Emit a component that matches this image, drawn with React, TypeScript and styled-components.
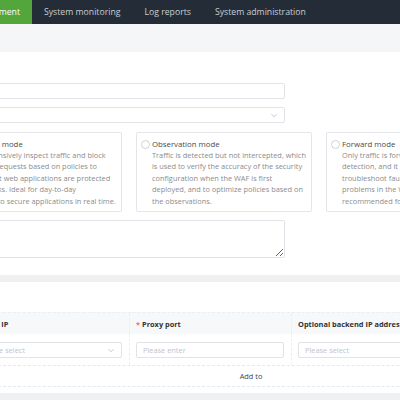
import React from "react";
import styled, { createGlobalStyle } from "styled-components";

const GlobalStyle = createGlobalStyle`
  html, body { margin: 0; padding: 0; overflow: hidden; }
  body {
    width: 400px;
    height: 400px;
    background: #eff0f2;
    font-family: "Open Sans", "Noto Sans", sans-serif;
  }
  * { box-sizing: border-box; }
`;

const Page = styled.div`
  width: 900px;
  margin-left: -200px;
  min-height: 400px;
  background: #eff0f2;
`;

const Nav = styled.nav`
  display: flex;
  height: 24px;
  background: #242d37;
`;

const NavLead = styled.div`
  width: 232px;
  display: flex;
  justify-content: space-between;
`;

const Brand = styled.div`
  display: flex;
  align-items: center;
  padding-left: 14px;
  color: #ffffff;
  font-size: 9px;
  font-weight: 700;
`;

const Tab = styled.div<{ $active?: boolean }>`
  display: flex;
  align-items: center;
  padding: 0 12px;
  font-size: 8.7px;
  white-space: nowrap;
  color: ${(p) => (p.$active ? "#ffffff" : "#c9ced4")};
  background: ${(p) => (p.$active ? "#52a63c" : "transparent")};
`;

const Crumb = styled.div`
  height: 28px;
  display: flex;
  align-items: center;
  padding-left: 16px;
  background: #f5f6f7;
  color: #666;
  font-size: 7.4px;
`;

const Section = styled.section<{ $pt: number; $pb: number }>`
  background: #ffffff;
  padding: ${(p) => p.$pt}px 0 ${(p) => p.$pb}px 16px;
`;

const Gap = styled.div`
  height: 7px;
`;

const SectionTitle = styled.div`
  height: 14px;
  line-height: 14px;
  font-size: 8px;
  font-weight: 700;
  color: #333;
`;

const FormRow = styled.div<{ $mt: number }>`
  display: grid;
  grid-template-columns: 130px auto;
  align-items: start;
  margin-top: ${(p) => p.$mt}px;
`;

const Label = styled.div`
  font-size: 7.4px;
  line-height: 16px;
  color: #555;
  text-align: right;
  padding-right: 10px;
`;

const Req = styled.span`
  color: #f56c6c;
  margin-right: 2px;
`;

const Input = styled.div<{ $w?: number }>`
  position: relative;
  width: ${(p) => (p.$w ? `${p.$w}px` : "100%")};
  height: 16px;
  border: 1px solid #e1e3e8;
  border-radius: 2px;
  background: #fff;
  display: flex;
  align-items: center;
  padding: 0 6px;
  font-size: 7.4px;
  color: #c0c4cc;
  white-space: nowrap;
`;

const Chevron = styled.svg`
  position: absolute;
  right: 7px;
  top: 5px;
  width: 6px;
  height: 5px;
`;

const Cards = styled.div`
  display: flex;
  gap: 14px;
`;

const Card = styled.div`
  width: 176px;
  flex: none;
  border: 1px solid #e4e6eb;
  border-radius: 2px;
  padding: 5px 6px 4px 4px;
  display: grid;
  grid-template-columns: 11px 1fr;
`;

const Radio = styled.span`
  width: 9px;
  height: 9px;
  margin-top: 1.5px;
  border: 1px solid #cfd2d8;
  border-radius: 50%;
  background: #fff;
`;

const CardTitle = styled.div`
  font-size: 7.8px;
  line-height: 12px;
  color: #4a4a4a;
  white-space: nowrap;
`;

const CardDesc = styled.div`
  grid-column: 2;
  font-size: 7.4px;
  line-height: 11.4px;
  color: #8c8c8c;
  white-space: nowrap;
`;

const TextArea = styled.textarea`
  width: 339px;
  height: 38px;
  border: 1px solid #e1e3e8;
  border-radius: 2px;
  margin: 0;
  padding: 4px 6px;
  font-family: inherit;
  font-size: 7.4px;
  outline: none;
  display: block;
`;

const TableRow = styled.div`
  display: grid;
  grid-template-columns: 152px auto;
  margin-top: 6px;
`;

const Table = styled.div`
  width: 566px;
`;

const THead = styled.div`
  display: grid;
  grid-template-columns: 162px 162px 162px 80px;
  height: 22px;
  background: #f7f8fa;
  border-top: 1px dashed #eceef1;
`;

const Th = styled.div`
  display: flex;
  align-items: center;
  padding: 0 6px;
  font-size: 7.4px;
  font-weight: 700;
  color: #333;
  white-space: nowrap;
  overflow: hidden;
  border-right: 1px dashed #eceef1;
`;

const TBody = styled.div`
  display: grid;
  grid-template-columns: 162px 162px 162px 80px;
  height: 32px;
  border-bottom: 1px dashed #e6e8eb;
`;

const Td = styled.div`
  display: flex;
  align-items: center;
  padding: 0 7px 0 6px;
  border-right: 1px dashed #eceef1;
`;

const AddRow = styled.div`
  height: 21px;
  display: flex;
  align-items: center;
  justify-content: center;
  border-bottom: 1px dashed #e6e8eb;
  font-size: 7.4px;
  color: #444;
`;

const ChevronIcon = () => (
  <Chevron viewBox="0 0 6 5" fill="none">
    <path d="M0.5 1.2 L3 3.8 L5.5 1.2" stroke="#b8bcc4" strokeWidth="0.8" />
  </Chevron>
);

export default function App() {
  return (
    <>
      <GlobalStyle />
      <Page>
        <Nav>
          <NavLead>
            <Brand>WAF</Brand>
            <Tab $active>Policy management</Tab>
          </NavLead>
          <Tab>System monitoring</Tab>
          <Tab>Log reports</Tab>
          <Tab>System administration</Tab>
        </Nav>
        <Crumb>Sites / Add site</Crumb>
        <Section $pt={10} $pb={17}>
          <SectionTitle>Basic information</SectionTitle>
          <FormRow $mt={7}>
            <Label><Req>*</Req>Site name</Label>
            <Input $w={339} />
          </FormRow>
          <FormRow $mt={8}>
            <Label><Req>*</Req>Site group</Label>
            <Input $w={339}>
              <ChevronIcon />
            </Input>
          </FormRow>
          <FormRow $mt={9}>
            <Label><Req>*</Req>Protection mode</Label>
            <Cards>
              <Card>
                <Radio />
                <CardTitle>Protection mode</CardTitle>
                <CardDesc>
                  Comprehensively inspect traffic and block
                  <br />
                  malicious requests based on policies to
                  <br />
                  ensure that web applications are protected
                  <br />
                  from attacks. Ideal for day-to-day
                  <br />
                  operation to secure applications in real time.
                </CardDesc>
              </Card>
              <Card>
                <Radio />
                <CardTitle>Observation mode</CardTitle>
                <CardDesc>
                  Traffic is detected but not intercepted, which
                  <br />
                  is used to verify the accuracy of the security
                  <br />
                  configuration when the WAF is first
                  <br />
                  deployed, and to optimize policies based on
                  <br />
                  the observations.
                </CardDesc>
              </Card>
              <Card>
                <Radio />
                <CardTitle>Forward mode</CardTitle>
                <CardDesc>
                  Only traffic is forwarded without security
                  <br />
                  detection, and it is used to quickly
                  <br />
                  troubleshoot faults when there are
                  <br />
                  problems in the WAF. It is not
                  <br />
                  recommended for long-term use.
                </CardDesc>
              </Card>
            </Cards>
          </FormRow>
          <FormRow $mt={8}>
            <Label>Remarks</Label>
            <TextArea />
          </FormRow>
        </Section>
        <Gap />
        <Section $pt={10} $pb={6}>
          <SectionTitle>Listening configuration</SectionTitle>
          <TableRow>
            <Label><Req>*</Req>Ports</Label>
            <Table>
              <THead>
                <Th><Req>*</Req>Local IP</Th>
                <Th><Req>*</Req>Proxy port</Th>
                <Th>Optional backend IP address</Th>
                <Th>Operation</Th>
              </THead>
              <TBody>
                <Td>
                  <Input>
                    Please select
                    <ChevronIcon />
                  </Input>
                </Td>
                <Td>
                  <Input>Please enter</Input>
                </Td>
                <Td>
                  <Input>
                    Please select
                    <ChevronIcon />
                  </Input>
                </Td>
                <Td />
              </TBody>
              <AddRow>Add to</AddRow>
            </Table>
          </TableRow>
        </Section>
      </Page>
    </>
  );
}
